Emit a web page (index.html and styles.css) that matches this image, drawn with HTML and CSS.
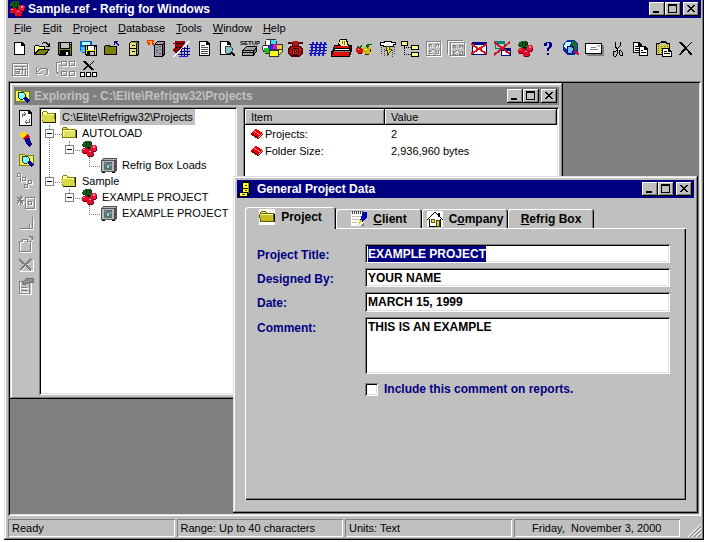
FILE: index.html
```html
<!DOCTYPE html>
<html lang="en">
<head>
    <meta charset="UTF-8">
    <meta name="viewport" content="width=device-width, initial-scale=1.0">
    <title>Sample.ref - Refrig for Windows</title>
    <link rel="stylesheet" href="styles.css">
</head>
<body>
    <!-- Shared icons -->
    <svg class="sprite" aria-hidden="true">
        <symbol id="cherries" viewBox="0 0 16 16">
            <path d="M2 1h2V0h6v1h1v4h-1v3H4V5H1V3h1z" fill="#0a6414"/>
            <path d="M5 1h1v4H5zM8 1h1v4H8zM2 5h2v1H2zM10 1h1v3h-1zM6 6h3v2H6z" fill="#021a04"/>
            <path d="M1 8h1V7h5v1h1v4H7v1H2v-1H1z" fill="#d80828"/>
            <path d="M10 5h1V4h4v1h1v5h-1v1h-4v-1h-1z" fill="#f01840"/>
            <path d="M6 10h1V8h5v1h1v6h-1v1H7v-1H6z" fill="#e00c30"/>
            <path d="M2 8h2v1H2zM12 5h2v2h-2zM8 10h2v1H8z" fill="#ff98b0"/>
            <path d="M2 12h4v1H2zM7 15h5v1H7zM12 13h1v2h-1zM15 7h1v3h-1zM12 10h3v1h-3z" fill="#600010"/>
        </symbol>
        <symbol id="folder" viewBox="0 0 16 16">
            <path d="M1 4l1-2h4l1 2h8v9H1z" fill="#808000"/>
            <path d="M2 4V3h4v1zM2 5h12v7H2z" fill="#e0e060"/>
            <path d="M2 5h12v1H2zM2 5h1v7H2z" fill="#ffffa8"/>
            <path d="M2 13h14V5h-1v8z" fill="#000"/>
        </symbol>
        <symbol id="folder-open" viewBox="0 0 16 16">
            <path d="M1 4l1-2h4l1 2h7v9H1z" fill="#808000"/>
            <path d="M2 3h4v2h7v7H3z" fill="#ffffa8"/>
            <path d="M0 6h12l3 7H2z" fill="#d8d848"/>
            <path d="M2 13h13v1H2zM14 4h1v9h-1z" fill="#202000"/>
        </symbol>
        <symbol id="box" viewBox="0 0 16 16">
            <path d="M0 3l2-2h14v12l-2 2H0z" fill="#505050"/>
            <path d="M1 4h12v10H1zM2 2h13l-1 1H2z" fill="#b8b8b8"/>
            <path d="M3 5h8v8H3z" fill="#587078"/>
            <path d="M4 6h1v1H4zM6 8h2v3H6zM9 7h1v2H9z" fill="#b0c8c8"/>
            <path d="M1 15h3v1H1zM11 15h3v1h-3z" fill="#000"/>
        </symbol>
        <symbol id="book" viewBox="0 0 12 12">
            <path d="M0 5l5-4 7 4-5 5z" fill="#e80000"/>
            <path d="M0 5l7 4v2L0 7zM7 9l5-4v2l-5 4z" fill="#800000"/>
            <path d="M7 9l5-4v1l-5 4z" fill="#d0c0c0"/>
            <path d="M3 3l6 4" stroke="#ff7070" fill="none"/>
        </symbol>
        <symbol id="explore" viewBox="0 0 16 16">
            <path d="M0 2h5l1 1h8v10H0z" fill="#f0f060" stroke="#808000"/>
            <path d="M9 9l5 5" stroke="#0000a0" stroke-width="3"/>
            <path d="M4 4h4l2 2v3l-2 2H5L3 9V6z" fill="#80ffff" stroke="#103838"/>
            <path d="M5 6h2v1H5z" fill="#fff"/>
        </symbol>
        <symbol id="cabinet" viewBox="0 0 16 16">
            <path d="M4 2l2-2h6v12l-2 4H0v-4h4z" fill="#000"/>
            <path d="M5 2h5v5H5zM5 8h5v3H5zM2 12h7v3H2z" fill="#ffff30"/>
            <path d="M10 2l1-1v10l-1 3z" fill="#a0a000"/>
            <path d="M7 4h2v1H7zM7 9h2v1H7zM4 13h3v1H4z" fill="#404000"/>
        </symbol>
        <symbol id="minimize" viewBox="0 0 12 10"><path d="M2 7h6v2H2z"/></symbol>
        <symbol id="maximize" viewBox="0 0 12 10"><path d="M1 0h9v9H1zM2 2v6h7V2z" fill-rule="evenodd"/></symbol>
        <symbol id="close" viewBox="0 0 12 10"><path d="M2 1h2v1h1v1h2V2h1V1h2v1H9v1H8v1H7v1h1v1h1v1h1v1H8V7H7V6H5v1H4v1H2V7h1V6h1V5h1V4H4V3H3V2H2z"/></symbol>
    </svg>

    <div class="app">
        <header class="title-bar">
            <svg class="title-icon"><use href="#cherries"/></svg>
            <h1>Sample.ref - Refrig for Windows</h1>
            <div class="window-buttons">
                <button aria-label="Minimize"><svg><use href="#minimize"/></svg></button>
                <button aria-label="Maximize"><svg><use href="#maximize"/></svg></button>
                <button aria-label="Close"><svg><use href="#close"/></svg></button>
            </div>
        </header>

        <nav class="menu">
            <button><u>F</u>ile</button>
            <button><u>E</u>dit</button>
            <button><u>P</u>roject</button>
            <button><u>D</u>atabase</button>
            <button><u>T</u>ools</button>
            <button><u>W</u>indow</button>
            <button><u>H</u>elp</button>
        </nav>

        <div class="toolbar">
            <button aria-label="New"><svg viewBox="0 0 21 20">
                <path d="M5 4h8l3 3v10H5z"/><path d="M6 5h6v3h3v8H6z" fill="#fff"/>
            </svg></button>
            <button aria-label="Open"><svg viewBox="0 0 21 20">
                <path d="M2 8h1V7h4v1h6v3h5l-4 6H2z"/><path d="M3 8h4v1h5v2H6l-3 4z" fill="#ffff80"/><path d="M7 12h9l-3 4H4z" fill="#808000"/>
                <path d="M10 5h1V4h4v1h1v1h1V5h1v4h-4V8h2V7h-1V6h-1V5h-3v1h-1z"/>
            </svg></button>
            <button aria-label="Save"><svg viewBox="0 0 21 20">
                <path d="M3 4h14v14H4l-1-1z"/><path d="M4 5h1v11H4zM15 7h1v10h-1zM5 11h10v1H5z" fill="#808000"/><path d="M6 5h8v5H6z" fill="#c0c0c0"/><path d="M11 14h2v3h-2zM15 5h1v1h-1z" fill="#fff"/>
            </svg></button>
            <button aria-label="Save all"><svg viewBox="0 0 21 20">
                <path d="M2 3h12v12H4l-2-2z" fill="#0060c8"/><path d="M4 4h8v3H4z" fill="#c0ffff"/><path d="M3 9h4v5H3z" fill="#40c0ff"/>
                <path d="M7 7h12v11H8l-1-1z"/><path d="M8 8h1v8H8zM17 9h1v8h-1zM9 12h8v1H9z" fill="#f0e000"/><path d="M10 8h6v4h-6z" fill="#fff"/><path d="M12 14h4v3h-4z" fill="#c0c0c0"/>
            </svg></button>
            <button aria-label="Close project"><svg viewBox="0 0 21 20">
                <path d="M3 8h1V7h5v1h7v9H3z"/><path d="M4 8h4v1h7v7H4z" fill="#808000"/><path d="M13 3h4v1h-2l3 3v1h-1l-3-3v2h-1z" fill="#000080"/>
            </svg></button>
            <button aria-label="Cabinet"><svg viewBox="0 0 21 20">
                <path d="M5 5l2-2h8v13l-2 2H5z"/><path d="M6 5h6v5H6zM6 11h6v6H6z" fill="#e8e070"/><path d="M13 5l1-1v11l-1 2zM7 4h6v1H7z" fill="#a0a020"/><path d="M8 7h3v1H8zM8 13h3v1H8z"/>
            </svg></button>
            <button aria-label="Load box"><svg viewBox="0 0 21 20">
                <path d="M7 6l3-3h8v13l-3 3H7z"/><path d="M8 7h7v11H8zM10 4h7l-2 2H9z" fill="#a0a0a0"/><path d="M16 6l1-1v10l-1 2z" fill="#606060"/>
                <path d="M9 9h2v1H9zM12 11h2v1h-2zM9 14h2v1H9z" fill="#00a080"/><path d="M12 8h2v1h-2zM9 12h2v1H9zM12 15h2v1h-2z" fill="#c000a0"/>
                <path d="M0 2h7v2H5l3 3-2 1-3-3v2H1z" fill="#f03000"/><path d="M1 3h3v1H3l2 2" fill="none" stroke="#ffc000"/>
            </svg></button>
            <button aria-label="Equipment"><svg viewBox="0 0 21 20">
                <path d="M5 3h10v2l-2 2v3l-4 5H5l-2-3 2-3V6H3V5h2z" fill="#900000"/><path d="M6 5h8M5 9h7M5 12h5" stroke="#400000"/>
                <path d="M18 3h2L5 19H3z" fill="#fff"/><path d="M10 13.500h10M8 16.500h12M12 10.500h8M11.500 11v8M14.500 9v10M17.500 7v12" stroke="#000090"/><path d="M9 18.500h9" stroke="#2020d0"/>
            </svg></button>
            <button aria-label="Reports"><svg viewBox="0 0 21 20">
                <path d="M6 3h8l3 3v12H6z"/><path d="M7 4h6v3h3v10H7z" fill="#fff"/><path d="M8 7.500h4M8 9.500h7M8 11.500h7M8 13.500h7M8 15.500h7" stroke="#505050"/>
            </svg></button>
            <button aria-label="Print preview"><svg viewBox="0 0 21 20">
                <path d="M4 3h8l3 3v11H4z"/><path d="M5 4h6v3h3v9H5z" fill="#fff"/><path d="M14 13l5 5" stroke="#000" stroke-width="2"/><path d="M10 8h4l2 2v3l-2 2h-4l-1-2v-3z" fill="#80c8c8" stroke="#404040"/>
            </svg></button>
            <button aria-label="Printer setup"><svg viewBox="0 0 21 20">
                <text class="setup-text" x="1" y="7">SETUP</text>
                <path d="M3 13l4-5h11v5l-3 5H3z"/><path d="M7 9h10l-3 3H5zM4 13h10v1H4zM4 15h10v2H4z" fill="#a0a0a0"/><path d="M15 13l2-3v3l-2 3z" fill="#606060"/>
            </svg></button>
            <button aria-label="Colors"><svg viewBox="0 0 21 20">
                <path d="M4 1h10v2h1v3h6v8l-3 2-1 3H7v-3H3v-2H1v-2H0V8h1V7h2V3h1z" fill="#303030"/><path d="M4 2h4v5H4z" fill="#fff"/><path d="M9 2h5v4H9z" fill="#40d8f0"/><path d="M1 8h5v4H1z" fill="#fff"/><path d="M2 10h5v5H3z" fill="#20c020"/><path d="M7 7h4v5H7z" fill="#2030e0"/><path d="M11 6h4v5h-4z" fill="#e010c0"/><path d="M8 13h8v5H8zM17 12h3v2l-3 2z" fill="#ffff20"/><path d="M15 7h5v4h-5z" fill="#e8d040"/>
            </svg></button>
            <button aria-label="Compressor"><svg viewBox="0 0 21 20">
                <path d="M3 4h15v2h-4v2h2l2 3v4l-3 4H6l-3-4v-4l2-3h2V6H3z" fill="#500000"/><path d="M8 3h5v5H8zM6 9h9l2 3-2 5H6l-2-3z" fill="#b01818"/><path d="M8 10h5v1h1v5h-1v1H8v-1H7v-5h1z" fill="#300"/><path d="M8 11h5v5H8z" fill="#c82020"/><path d="M9 12h3v3H9z" fill="#600"/><path d="M10 13h1v1h-1z" fill="#ff7060"/>
            </svg></button>
            <button aria-label="Coil"><svg viewBox="0 0 21 20">
                <path d="M1 6.500h18M2 9.500h17M1 12.500h18M1 15.500h17" stroke="#0000a8"/><path d="M5 4L3 18M9 4L7 18M13 4l-2 14M17 4l-2 14" stroke="#1818d0" stroke-width="2"/>
            </svg></button>
            <button aria-label="Library"><svg viewBox="0 0 21 20">
                <path d="M3 7h4l2-6h7l2 6h3v5l-2 7H0v-6l2-2z"/><path d="M4 8h14v2H3zM2 14h16v4H1z" fill="#e01010"/><path d="M4 11h14v1H4z" fill="#fff"/><path d="M3 13h16v1H3z" fill="#808080"/><path d="M9 2h6l2 6h-6L8 6z" fill="#ffffa0"/><path d="M11.500 3v3M13.500 3v4" stroke="#807020"/>
            </svg></button>
            <button aria-label="Food"><svg viewBox="0 0 21 20">
                <path d="M3 9h2v1h3v1h1v4H8v1H4v-1H3v-1H2v-4h1z" fill="#e01010"/><path d="M10 9h6v1h1v4h-1v2h-5v-1h-1v-1H9v-4h1z" fill="#c8b800"/><path d="M3 8l3 2 2-3M12 9l2-3h4l-3 1-2 3" fill="none" stroke="#006000"/><path d="M4 15h4v1H4zM11 16h4v1h-4zM16 11h1v3h-1z" fill="#401000"/><path d="M4 11h1v1H4zM11 11h2v1h-2z" fill="#fff"/>
            </svg></button>
            <button aria-label="Weather"><svg viewBox="0 0 21 20">
                <path d="M3 4h4V3h8v1h4v3h-2v2H6V8H3z"/><path d="M4 5h4V4h6v1h4v1h-2v2H7V7H4z" fill="#fff"/><path d="M9 8h4v3h2v2h-1l-3 5h-1v-5H8v-1h1z" fill="#404000"/><path d="M10 9h2v3h2l-3 4v-4h-1z" fill="#e8e000"/><path d="M4.500 9v7M7.500 11v7M17.500 9v7M15.500 12v7" stroke="#404040" stroke-dasharray="1 1"/>
            </svg></button>
            <button aria-label="Tree"><svg viewBox="0 0 21 20">
                <path d="M1 3h7v5H1zM11 7h8v5h-8zM11 14h8v5h-8z"/><path d="M2 4h5v3H2zM12 8h6v3h-6zM12 15h6v3h-6z" fill="#ffff90"/><path d="M4.500 8v9M4 9.500h7M4 16.500h7" stroke="#000" stroke-dasharray="1 1"/>
            </svg></button>
            <button aria-label="Tile" disabled><svg viewBox="0 0 21 20">
                <path d="M4.500 4.500h14v14h-14zM7.500 7.500l3 3M15.500 7.500l-3 3M7.500 15.500l3-3M15.500 15.500l-3-3M7.500 10V7.500H10M13 7.500h3V10M7.500 13v3H10M13 16h3v-3" fill="none" stroke="#fff"/>
                <path d="M3.500 3.500h14v14h-14zM6.500 6.500l3 3M14.500 6.500l-3 3M6.500 14.500l3-3M14.500 14.500l-3-3M6.500 9V6.500H9M12 6.500h3V9M6.500 12v3H9M12 15h3v-3" fill="none" stroke="#808080"/>
            </svg></button>
            <button aria-label="Tile all" disabled><svg viewBox="0 0 21 20">
                <path d="M5.500 5.500h14v13h-14zM2.500 17V3.500H18M8.500 8.500l3 3M16.500 8.500l-3 3M8.500 16.500l3-3M16.500 16.500l-3-3" fill="none" stroke="#fff"/>
                <path d="M4.500 4.500h14v13h-14zM1.500 16V2.500H17M7.500 7.500l3 3M15.500 7.500l-3 3M7.500 15.500l3-3M15.500 15.500l-3-3M7.500 10V7.500H10M13 7.500h3V10M7.500 13v3H10M13 16h3v-3" fill="none" stroke="#808080"/>
            </svg></button>
            <button aria-label="Close window"><svg viewBox="0 0 21 20">
                <path d="M3 4h15v13H3z" fill="#000080"/><path d="M4 7h13v9H4z" fill="#fff"/><path d="M2 6l16 10M18 6L2 16" stroke="#e01818" stroke-width="2"/>
            </svg></button>
            <button aria-label="Close all windows"><svg viewBox="0 0 21 20">
                <path d="M3 3h10v8H3z" fill="#008080"/><path d="M4 6h8v4H4z" fill="#c0c0c0"/><path d="M9 10h10v8H9z" fill="#000080"/><path d="M10 13h8v4h-8z" fill="#fff"/><path d="M2 4l16 12M18 4L2 17" stroke="#c81818" stroke-width="2"/>
            </svg></button>
            <button aria-label="About"><svg viewBox="0 0 21 20"><use href="#cherries" x="2" y="3" width="16" height="16"/></svg></button>
            <button aria-label="Help"><svg viewBox="0 0 21 20">
                <path d="M6 5h2V4h5v1h1v4h-1v1h-1v1h-1v2H9v-3h1V9h1V5H9v3H6zM9 15h2v2H9z" fill="#000090"/>
            </svg></button>
            <button aria-label="Web"><svg viewBox="0 0 21 20">
                <path d="M6 2h8l3 4v7l-3 4H6l-4-4V6z" fill="#0830a0"/><path d="M5 4h5l-1 4-4 3-2-3z" fill="#d0ffff"/><path d="M11 3h3l2 3v5l-3 1-2-3z" fill="#187038"/><path d="M6 8h5l2 3-2 4H7z" fill="#70b8f0" stroke="#000060"/><path d="M14 13l4 4" stroke="#e00040" stroke-width="2"/>
            </svg></button>
            <button aria-label="Mail"><svg viewBox="0 0 21 20">
                <path d="M3 7h17v11H3z" fill="#808080"/><path d="M1 5h17v11H1z"/><path d="M2 6h15v9H2z" fill="#fff"/><path d="M13 7h3v2h-3z" fill="#c0c0c0"/><path d="M7 9.500h5M6 11.500h8" stroke="#808080"/>
            </svg></button>
            <button aria-label="Cut"><svg viewBox="0 0 21 20">
                <path d="M8 4v4l2 3v2M13 4v4l-3 3v2" fill="none" stroke="#000"/><path d="M7 13h2l1-1v4l-1 2H7l-1-1v-3zM12 12h1l2 2v3h-2l-1-1z" fill="none" stroke="#000"/>
            </svg></button>
            <button aria-label="Copy"><svg viewBox="0 0 21 20">
                <path d="M3 4h6l3 3v8H3z"/><path d="M4 5h4v3h3v6H4z" fill="#fff"/><path d="M5 8.500h4M5 10.500h4M5 12.500h4" stroke="#000"/>
                <path d="M9 8h6l3 3v7H9z"/><path d="M10 9h4v3h3v5h-7z" fill="#fff"/><path d="M11 12.500h2M11 14.500h5" stroke="#000"/>
            </svg></button>
            <button aria-label="Paste"><svg viewBox="0 0 21 20">
                <path d="M3 5h3l2-2h4l2 2h3v12H3z"/><path d="M4 6h12v10H4z" fill="#d8d040"/><path d="M5.500 6v10M8.500 6v10M11.500 6v10M14.500 6v10" stroke="#706800" stroke-dasharray="1 1"/><path d="M7 5h6v2H7z" fill="#c0c0c0"/><path d="M9 10h6l4 3v6H9z"/><path d="M10 11h5v3h3v4h-8z" fill="#fff"/><path d="M11 13.500h3M11 15.500h6" stroke="#000"/>
            </svg></button>
            <button aria-label="Delete"><svg viewBox="0 0 21 20">
                <path d="M3 4h3l4 5 5-5h1l-5 6 5 6v1h-2l-4-6-5 6H3l5-7z"/>
            </svg></button>
            <button aria-label="Form view" disabled><svg viewBox="0 0 21 20">
                <path d="M4.500 5.500h15v12h-15zM6 8.500h12M7 11.500h4v4H7M12 11.500h5v4M14.500 9v7" fill="none" stroke="#fff"/><path d="M3.500 4.500h15v12h-15zM5 7.500h12M6 10.500h4v4H6M11 10.500h5v4M13.500 8v7M6 12.500h4" fill="none" stroke="#808080"/>
            </svg></button>
            <button aria-label="Undo" disabled><svg viewBox="0 0 21 20">
                <path d="M5 9v6h6M6 14l4-4h5l2 3-1 3-2 1" fill="none" stroke="#fff"/><path d="M4 8v6h6M5 13l4-4h5l2 3-1 3-2 1" fill="none" stroke="#808080"/>
            </svg></button>
            <button aria-label="Rearrange" disabled><svg viewBox="0 0 21 20">
                <path d="M6 4.500H2.500V17M6 15.500h1M7.500 3.500h5v4h-5zM15.500 3.500h5v4h-5zM7.500 13.500h5v4h-5zM15.500 13.500h5v4h-5z" fill="none" stroke="#fff"/><path d="M5 3.500H1.500V13l2 2M6.500 2.500h5v4h-5zM14.500 2.500h5v4h-5zM6.500 12.500h5v4h-5zM14.500 12.500h5v4h-5z" fill="none" stroke="#808080"/>
            </svg></button>
            <button aria-label="Remove"><svg viewBox="0 0 21 20">
                <path d="M5 2h2l4 4 4-4h1l-4 5 4 4h-2l-4-3-4 3H4l5-4z"/><path d="M2 13h5v5H2zM8 13h5v5H8zM14 13h5v5h-5z"/><path d="M3 14h3v3H3zM9 14h3v3H9zM15 14h3v3h-3z" fill="#fff"/>
            </svg></button>
        </div>

        <main class="workspace">
            <section class="window explorer">
                <div class="title-bar inactive">
                    <svg class="title-icon"><use href="#explore"/></svg>
                    <h2>Exploring - C:\Elite\Refrigw32\Projects</h2>
                    <div class="window-buttons">
                        <button aria-label="Minimize"><svg><use href="#minimize"/></svg></button>
                        <button aria-label="Maximize"><svg><use href="#maximize"/></svg></button>
                        <button aria-label="Close"><svg><use href="#close"/></svg></button>
                    </div>
                </div>
                <div class="explorer-body">
                    <div class="side-tools">
                        <button aria-label="Refresh"><svg viewBox="0 0 20 18">
                            <path d="M2 1h10l3 3v13H2z"/><path d="M3 2h8v3h3v11H3z" fill="#fff"/><path d="M5 8V5h3M7 3l2 2-2 2M12 10v3H9M10 11l-2 2 2 2" fill="none" stroke="#606060"/>
                        </svg></button>
                        <button aria-label="Flashlight"><svg viewBox="0 0 20 18">
                            <path d="M4 2h5v2h2v5H6L3 6z" fill="#ffe000"/><path d="M6 8l5-4 2 3-5 4z" fill="#e00000"/><path d="M8 9l4-2 3 7-3 3-3-3z" fill="#000090"/>
                        </svg></button>
                        <button aria-label="Find"><svg viewBox="0 0 20 18"><use href="#explore" x="2" y="1" width="16" height="16"/></svg></button>
                        <button aria-label="Expand" disabled><svg viewBox="0 0 20 18">
                            <path d="M1 2h3v3H1zM6 6h3v3H6zM12 9h3v3h-3zM8 13h3v3H8zM4 5v6M9 8v5" fill="none" stroke="#fff"/><path d="M0 1h3v3H0zM5 5h3v3H5zM11 8h3v3h-3zM7 12h3v3H7zM3 4v6" fill="none" stroke="#808080"/>
                        </svg></button>
                        <button aria-label="New box" disabled><svg viewBox="0 0 20 18">
                            <path d="M9 5h9v11H9zM1 4l6 8M7 4l-6 8M0 9h8M12 9h3v3h-3z" fill="none" stroke="#fff"/><path d="M8 4h9v11H8zM0 3l6 8M6 3L0 11M3 2v10M0 7h7M11 8h3v3h-3z" fill="none" stroke="#808080"/>
                        </svg></button>
                        <button aria-label="Size" disabled><svg viewBox="0 0 20 18">
                            <path d="M4 15h12V4M13 11v4" fill="none" stroke="#fff"/><path d="M3 14h12V3M12 10v4" fill="none" stroke="#808080"/>
                        </svg></button>
                        <button aria-label="New folder" disabled><svg viewBox="0 0 20 18">
                            <path d="M3 7h3V5h5v2h3v10H3zM12 3h3v3" fill="none" stroke="#fff"/><path d="M2 6h3V4h5v2h3v10H2zM12 1h3v3M12 1l4 4" fill="none" stroke="#808080"/>
                        </svg></button>
                        <button aria-label="Delete" disabled><svg viewBox="0 0 20 18">
                            <path d="M3 4l12 11M14 4L4 15h12V4" fill="none" stroke="#fff"/><path d="M2 3l12 11M14 3L3 14" stroke="#808080" stroke-width="2"/>
                        </svg></button>
                        <button aria-label="Properties" disabled><svg viewBox="0 0 20 18">
                            <path d="M3 5h11v12H3zM5 11h7M5 15h7" fill="none" stroke="#fff"/><path d="M2 4h10v12H2zM4 10h6M4 13h6" fill="none" stroke="#808080"/><path d="M5 6l5-5h6v4h-4L8 8z" fill="#909090" stroke="#707070"/>
                        </svg></button>
                    </div>
                    <ul class="tree sunken">
                        <li><svg><use href="#folder-open"/></svg><span class="current">C:\Elite\Refrigw32\Projects</span></li>
                        <li class="level-1"><button class="expander" aria-label="Collapse"></button><svg><use href="#folder"/></svg><span>AUTOLOAD</span></li>
                        <li class="level-2"><button class="expander" aria-label="Collapse"></button><svg><use href="#cherries"/></svg></li>
                        <li class="level-3"><svg><use href="#box"/></svg><span>Refrig Box Loads</span></li>
                        <li class="level-1"><button class="expander" aria-label="Collapse"></button><svg><use href="#folder-open"/></svg><span>Sample</span></li>
                        <li class="level-2"><button class="expander" aria-label="Collapse"></button><svg><use href="#cherries"/></svg><span>EXAMPLE PROJECT</span></li>
                        <li class="level-3"><svg><use href="#box"/></svg><span>EXAMPLE PROJECT</span></li>
                    </ul>
                    <div class="details sunken">
                        <table>
                            <thead>
                                <tr><th>Item</th><th>Value</th></tr>
                            </thead>
                            <tbody>
                                <tr><td><svg><use href="#book"/></svg>Projects:</td><td>2</td></tr>
                                <tr><td><svg><use href="#book"/></svg>Folder Size:</td><td>2,936,960 bytes</td></tr>
                            </tbody>
                        </table>
                    </div>
                </div>
            </section>

            <section class="window dialog">
                <div class="title-bar">
                    <svg class="title-icon"><use href="#cabinet"/></svg>
                    <h2>General Project Data</h2>
                    <div class="window-buttons">
                        <button aria-label="Minimize"><svg><use href="#minimize"/></svg></button>
                        <button aria-label="Maximize"><svg><use href="#maximize"/></svg></button>
                        <button aria-label="Close"><svg><use href="#close"/></svg></button>
                    </div>
                </div>
                <div class="tabs" role="tablist">
                    <button class="tab active" role="tab" aria-selected="true">
                        <svg viewBox="0 0 16 16"><path d="M0 0h16v16H0z" fill="#fff"/><path d="M0 5h1V3h1V2h5v1h1v1h7v1h1v8H1V9H0z" fill="#606000"/><path d="M2 3h5v1H2zM1 5h13v1H1z" fill="#ffffa0"/><path d="M1 6h13v6H2z" fill="#c8c020"/><path d="M2 13h14V5h-1v8z"/></svg>
                        <span>Pro<u>j</u>ect</span>
                    </button>
                    <button class="tab" role="tab">
                        <svg viewBox="0 0 16 16"><path d="M0 1h13v14H0z" fill="#fff"/><path d="M1.500 0v3M3.500 0v3M5.500 0v3M7.500 0v3M9.500 0v3M11.500 0v3" stroke="#404040"/><path d="M1 5.500h10M1 8.500h8M1 11.500h5" stroke="#c0c0c0"/><path d="M0 15h13v-4l-4 4z" fill="#808080"/><path d="M12 1h4v5l-4 5-3-1z" fill="#0000b0"/><path d="M9 9l3 1-5 4z" fill="#e0d000"/></svg>
                        <span><u>C</u>lient</span>
                    </button>
                    <button class="tab" role="tab">
                        <svg viewBox="0 0 16 16"><path d="M0 0h16v16H0z" fill="#fff"/><path d="M2.500 8v7.500h11V8M0 9l8-8 8 8" fill="none" stroke="#000"/><path d="M11 2h2v4h-2z"/><path d="M4 8h3v3H4z" fill="#e8e060" stroke="#606000"/><path d="M9 9h3v6H9z" fill="#d8d040" stroke="#404000"/></svg>
                        <span>C<u>o</u>mpany</span>
                    </button>
                    <button class="tab" role="tab"><span><u>R</u>efrig Box</span></button>
                </div>
                <form class="tab-panel" onsubmit="return false">
                    <label for="project-title">Project Title:</label>
                    <input class="sunken" type="text" id="project-title" value="EXAMPLE PROJECT">
                    <label for="designed-by">Designed By:</label>
                    <input class="sunken" type="text" id="designed-by" value="YOUR NAME">
                    <label for="project-date">Date:</label>
                    <input class="sunken" type="text" id="project-date" value="MARCH 15, 1999">
                    <label for="comment">Comment:</label>
                    <textarea class="sunken" id="comment">THIS IS AN EXAMPLE</textarea>
                    <div class="check-row">
                        <input class="sunken" type="checkbox" id="include-comment">
                        <label for="include-comment">Include this comment on reports.</label>
                    </div>
                </form>
            </section>
        </main>

        <footer class="status-bar">
            <div>Ready</div>
            <div>Range: Up to 40 characters</div>
            <div>Units: Text</div>
            <div class="date">Friday,&nbsp; November 3, 2000</div>
            <svg class="grip" viewBox="0 0 13 13">
                <path d="M0 13L13 0M4 13l9-9M8 13l5-5" stroke="#fff"/>
                <path d="M2 13L13 2M6 13l7-7M10 13l3-3" stroke="#808080"/>
            </svg>
        </footer>
    </div>

    <script>
        // Start with the first field ready to be typed over
        document.getElementById('project-title').select();
    </script>
</body>
</html>
```
FILE: styles.css
```css
* {
    margin: 0;
    padding: 0;
    box-sizing: border-box;
}

body {
    font-family: "Liberation Sans", Arial, sans-serif;
    font-size: 11px;
    line-height: 16px;
    background: #fff;
    color: #000;
    min-height: 100vh;
    display: flex;
    padding: 0 0 2px 4px;
}

button,
input,
textarea {
    font: inherit;
    color: inherit;
}

button {
    background: none;
    border: none;
}

svg {
    display: block;
    flex: none;
    shape-rendering: crispEdges;
}

.sprite {
    position: absolute;
    width: 0;
    height: 0;
}

.app {
    flex: 1;
    min-width: 0;
    display: flex;
    flex-direction: column;
    background: #c0c0c0;
    padding: 0 3px 3px 4px;
    box-shadow: inset -1px -1px #000, inset 1px 0 #dfdfdf, inset -2px -2px #808080, inset 2px 0 #fff;
}

/* Title bars */
.title-bar {
    display: flex;
    align-items: center;
    gap: 3px;
    height: 18px;
    padding: 0 2px 0 1px;
    background: #000080;
    color: #fff;
}

.title-bar.inactive {
    background: #808080;
    color: #c0c0c0;
}

.title-bar h1,
.title-bar h2 {
    flex: 1;
    font-size: 12px;
    font-weight: bold;
    white-space: nowrap;
}

.title-icon {
    width: 16px;
    height: 16px;
}

.window-buttons {
    display: flex;
}

.window-buttons button {
    width: 16px;
    height: 14px;
    padding: 2px;
    background: #c0c0c0;
    box-shadow: inset -1px -1px #000, inset 1px 1px #fff, inset -2px -2px #808080;
}

.window-buttons button:last-child {
    margin-left: 2px;
}

.window-buttons svg {
    width: 12px;
    height: 10px;
}

/* Menu and toolbar */
.menu {
    display: flex;
    height: 19px;
    align-items: center;
    gap: 11px;
    padding-left: 6px;
}

.toolbar {
    display: flex;
    flex-wrap: wrap;
    padding-bottom: 2px;
}

.toolbar button {
    width: 23px;
    height: 21px;
    padding: 0 1px;
}

.toolbar svg {
    width: 21px;
    height: 20px;
}

.setup-text {
    font-size: 6px;
    font-weight: bold;
}

/* Workspace */
.workspace {
    flex: 1;
    position: relative;
    min-height: 434px;
    background: #808080;
    box-shadow: inset 1px 1px #808080, inset -1px -1px #fff, inset 2px 2px #000, inset -2px -2px #dfdfdf;
}

.window {
    position: absolute;
    display: flex;
    flex-direction: column;
    padding: 4px;
    background: #c0c0c0;
    box-shadow: inset -1px -1px #000, inset 1px 1px #dfdfdf, inset -2px -2px #808080, inset 2px 2px #fff;
}

.sunken {
    background: #fff;
    border: none;
    box-shadow: inset 1px 1px #808080, inset -1px -1px #fff, inset 2px 2px #000, inset -2px -2px #dfdfdf;
}

.explorer {
    top: 2px;
    left: 2px;
    width: 553px;
    height: 316px;
}

.explorer-body {
    flex: 1;
    display: flex;
    padding-top: 2px;
}

.side-tools {
    width: 25px;
}

.side-tools button {
    display: block;
    width: 25px;
    height: 21px;
    padding: 0 3px;
}

.side-tools svg {
    width: 20px;
    height: 18px;
}

/* Project tree */
.tree {
    width: 198px;
    margin-right: 6px;
    padding: 2px;
    list-style: none;
    background: #fff;
}

.tree li {
    position: relative;
    display: flex;
    height: 16px;
}

.tree svg {
    position: relative;
    width: 16px;
    height: 16px;
}

.tree span {
    padding: 0 2px;
    margin-left: 3px;
    white-space: nowrap;
}

.tree .current {
    background: #c0c0c0;
}

.tree .level-1 {
    padding-left: 20px;
}

.tree .level-2 {
    padding-left: 40px;
}

.tree .level-3 {
    padding-left: 60px;
}

/* Connector lines */
.tree li::before {
    content: "";
    position: absolute;
    top: 0;
    height: 9px;
    width: 12px;
    border-left: 1px dotted #808080;
    border-bottom: 1px dotted #808080;
}

.tree li:first-child::before {
    display: none;
}

.tree .level-1::before {
    left: 8px;
}

.tree .level-2::before {
    left: 28px;
}

.tree .level-3::before {
    left: 48px;
}

.tree .level-1:nth-child(5)::before {
    top: -35px;
    height: 44px;
}

.expander {
    position: absolute;
    z-index: 1;
    top: 4px;
    width: 9px;
    height: 9px;
    border: 1px solid #808080;
    background: linear-gradient(#000, #000) center / 5px 1px no-repeat #fff;
}

.level-1 .expander {
    left: 4px;
}

.level-2 .expander {
    left: 24px;
}

/* Details list */
.details {
    flex: 1;
    padding: 2px;
}

.details table {
    width: 100%;
    border-collapse: collapse;
}

.details th {
    height: 16px;
    padding-left: 6px;
    font-weight: normal;
    text-align: left;
    background: #c0c0c0;
    box-shadow: inset -1px -1px #000, inset 1px 1px #fff, inset -2px -2px #808080;
}

.details th:first-child {
    width: 140px;
}

.details td {
    height: 17px;
    padding-left: 6px;
}

.details td svg {
    display: inline-block;
    width: 12px;
    height: 12px;
    margin-right: 2px;
    vertical-align: -2px;
}

/* Project data dialog */
.dialog {
    z-index: 2;
    top: 95px;
    left: 225px;
    right: 3px;
    bottom: 3px;
    font-weight: bold;
    font-size: 12px;
}

.tabs {
    display: flex;
    align-items: flex-end;
    height: 30px;
    padding: 0 8px;
}

.tab {
    display: flex;
    align-items: center;
    justify-content: center;
    gap: 6px;
    width: 86px;
    height: 19px;
    border-radius: 3px 3px 0 0;
    box-shadow: inset 1px 1px #fff, inset -1px 0 #000, inset -2px 0 #808080;
}

.tab.active {
    position: relative;
    width: 91px;
    height: 22px;
    margin-bottom: -1px;
    padding-bottom: 2px;
    background: #c0c0c0;
}

.tab svg {
    width: 16px;
    height: 16px;
}

.tab-panel {
    flex: 1;
    display: grid;
    grid-template-columns: 108px 1fr;
    grid-template-rows: 19px 19px 20px 57px 16px;
    row-gap: 5px;
    margin: 0 8px 9px;
    padding: 16px 16px 0 12px;
    box-shadow: inset 1px 1px #fff, inset -1px -1px #000, inset -2px -2px #808080;
    color: #000080;
}

.tab-panel label {
    padding-top: 3px;
}

.tab-panel input[type="text"],
.tab-panel textarea {
    width: 100%;
    padding: 0 3px;
    color: #000;
    outline: none;
    resize: none;
}

.tab-panel textarea {
    padding-top: 2px;
}

.tab-panel ::selection {
    background: #000080;
    color: #fff;
}

.check-row {
    grid-column: 2;
    display: flex;
    align-items: center;
    gap: 6px;
    margin-top: 4px;
}

.check-row input {
    appearance: none;
    width: 13px;
    height: 13px;
}

.tab-panel .check-row label {
    padding: 0;
}

/* Status bar */
.status-bar {
    display: flex;
    gap: 2px;
    height: 21px;
    padding: 3px 0 0;
}

.status-bar div {
    flex: 1;
    height: 18px;
    padding: 1px 4px;
    white-space: nowrap;
    box-shadow: inset 1px 1px #808080, inset -1px -1px #fff;
}

.status-bar .date {
    text-align: center;
}

.grip {
    width: 13px;
    height: 13px;
    margin: 5px 0 0 6px;
}
```
